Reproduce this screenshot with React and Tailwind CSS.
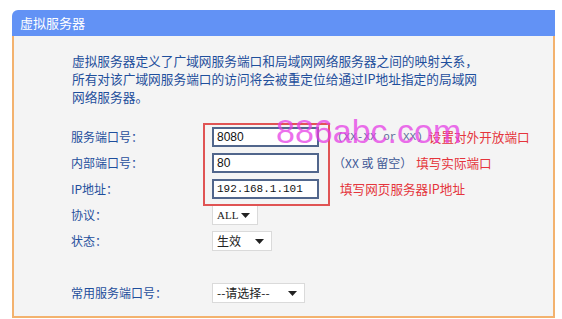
import React from "react";

const cjk = { fontFamily: '"Noto Sans CJK SC", "Liberation Sans", sans-serif' };

function Caret() {
  return (
    <svg width="9" height="5" viewBox="0 0 9 5" className="shrink-0">
      <path d="M0 0 H9 L4.5 5 Z" fill="#222" />
    </svg>
  );
}

function Select({ w, children, font, size }) {
  return (
    <div
      className="h-[20px] bg-white border border-[#dadada] flex items-center justify-between pl-[4px] pr-[7px] text-[#222]"
      style={{ width: w, fontSize: size || "12px", ...(font || cjk) }}
    >
      <span>{children}</span>
      <Caret />
    </div>
  );
}

function Input({ children, mono }) {
  return (
    <div
      className="w-[107px] h-[20px] bg-white border-[2px] border-[#51668c] flex items-center pl-[3px] text-[#111]"
      style={{
        fontFamily: mono ? '"Liberation Mono", monospace' : '"Liberation Sans", sans-serif',
        fontSize: mono ? "11px" : "12px",
      }}
    >
      {children}
    </div>
  );
}

export default function App() {
  const label = "w-[141px] text-[12px] text-[#1f4f9c] leading-none";
  return (
    <div className="w-[562px] h-[319px] bg-white overflow-hidden pt-[10px] pl-[12px]" style={cjk}>
      <div className="w-[543px]">
        <div className="h-[26px] bg-[#6292f5] rounded-tl-[6px] flex items-center pl-[8px] text-white text-[13px]">
          虚拟服务器
        </div>
        <div className="h-[282px] bg-[#f4f4f4] border-l-[2px] border-r-[2px] border-b-[2px] border-[#f3b26e] relative">
          <div className="pl-[58px] pt-[16px] text-[12.7px] leading-[18px] text-[#1f4f9c]">
            <div>虚拟服务器定义了广域网服务端口和局域网网络服务器之间的映射关系，</div>
            <div>所有对该广域网服务端口的访问将会被重定位给通过IP地址指定的局域网</div>
            <div>网络服务器。</div>
          </div>

          <div className="relative mt-[18px] pl-[57px]">
            <div className="flex flex-col">
              <div className="h-[26px] flex items-center">
                <div className={label}>服务端口号：</div>
                <Input>8080</Input>
                <span
                  className="ml-[18px] text-[11px] text-[#5b6c98]"
                  style={{ fontFamily: '"Liberation Mono", monospace' }}
                >
                  (XX-XX or XX)
                </span>
                <span className="ml-[6px] text-[12.6px] text-[#e5353c]">设置对外开放端口</span>
              </div>
              <div className="h-[26px] flex items-center">
                <div className={label}>内部端口号：</div>
                <Input>80</Input>
                <span className="ml-[14px] text-[12px] text-[#3d5796]">（XX 或 留空）</span>
                <span className="ml-[4px] text-[12.6px] text-[#e5353c]">填写实际端口</span>
              </div>
              <div className="h-[26px] flex items-center">
                <div className={label}>IP地址：</div>
                <Input mono>192.168.1.101</Input>
                <span className="ml-[21px] text-[12.6px] text-[#e5353c]">填写网页服务器IP地址</span>
              </div>
              <div className="h-[26px] flex items-center">
                <div className={label}>协议：</div>
                <Select w="46px" size="11px" font={{ fontFamily: '"Liberation Serif", serif' }}>ALL</Select>
              </div>
              <div className="h-[26px] flex items-center">
                <div className={label}>状态：</div>
                <Select w="60px">生效</Select>
              </div>
              <div className="h-[26px] mt-[26px] flex items-center">
                <div className={label}>常用服务端口号：</div>
                <Select w="93px">--请选择--</Select>
              </div>
            </div>

            <div className="absolute left-[189px] top-[-1px] w-[127px] h-[83px] border-[2px] border-[#e05454] pointer-events-none" />
            <div
              className="absolute left-[262px] top-[-10px] text-[34px] leading-none text-[#e63fe6] opacity-75 pointer-events-none"
              style={{ fontFamily: '"Liberation Sans", sans-serif' }}
            >
              886abc.com
            </div>
          </div>
        </div>
      </div>
    </div>
  );
}
